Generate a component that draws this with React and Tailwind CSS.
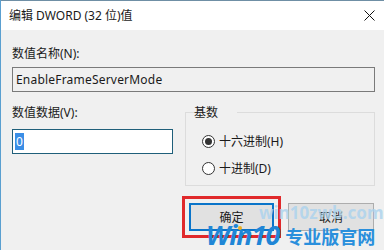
import React from "react";

const font = { fontFamily: '"Noto Sans", "Noto Sans CJK SC", sans-serif' };

const Radio = ({ checked, label }) => (
  <div className="flex items-center h-[17px]">
    <span className="w-[13px] h-[13px] rounded-full border border-[#333] bg-white flex items-center justify-center">
      {checked && <span className="w-[7px] h-[7px] rounded-full bg-[#333]" />}
    </span>
    <span className="ml-[4px] text-[12px] leading-[17px] text-[#1a1a1a]">{label}</span>
  </div>
);

export default function App() {
  return (
    <div
      className="relative w-[384px] h-[250px] overflow-hidden bg-[#f0f0f0] border-l border-[#5a9fd0] text-[#1a1a1a]"
      style={font}
    >
      {/* title bar */}
      <div className="h-[30px] bg-white border-t border-[#6f8fa5] flex items-center justify-between pl-[8px] pr-[9px]">
        <span className="text-[12px] leading-[17px]">编辑 DWORD (32 位)值</span>
        <svg width="11" height="11" viewBox="0 0 11 11">
          <path d="M0.5 0.5 L10.5 10.5 M10.5 0.5 L0.5 10.5" stroke="#111" strokeWidth="1" />
        </svg>
      </div>

      <div className="pl-[11px] pr-[9px] pt-[15px]">
        <div className="text-[12px] leading-[17px]">数值名称(N):</div>
        <div className="mt-[5px] h-[25px] border border-[#7a7a7a] flex items-center pl-[3px] text-[12px] tracking-[0.2px]">
          EnableFrameServerMode
        </div>

        <div className="flex mt-[12px]">
          <div className="w-[162px]">
            <div className="text-[12px] leading-[17px]">数值数据(V):</div>
            <div className="mt-[8px] h-[25px] w-[161px] border border-[#1f5f7a] bg-white flex items-center pl-[2px]">
              <span className="bg-[#3a8ee6] text-white text-[12px] leading-[17px] px-[1px]">0</span>
            </div>
          </div>
          <fieldset className="ml-[11px] w-[190px] h-[82px] border border-[#dcdcdc] pl-[16px]">
            <legend className="ml-[5px] px-[3px] -translate-x-[16px] text-[12px] leading-[17px]">基数</legend>
            <div className="mt-[12px] flex flex-col gap-[10px]">
              <Radio checked label="十六进制(H)" />
              <Radio label="十进制(D)" />
            </div>
          </fieldset>
        </div>

        <div className="flex justify-end mt-[17px] gap-[8px] pr-[1px]">
          <div className="border-[3px] border-[#e0292b] p-[4px] -m-[7px] mr-[-1px]">
            <button className="w-[85px] h-[28px] bg-[#e1e1e1] border-2 border-[#0a74c9] text-[12px] leading-[17px]">
              确定
            </button>
          </div>
          <button className="w-[86px] h-[28px] bg-[#e1e1e1] border border-[#adadad] text-[12px] leading-[17px]">
            取消
          </button>
        </div>
      </div>

      {/* watermark */}
      <span className="absolute left-[237px] top-[226px] w-[4px] h-[4px] rounded-full bg-[#f0b020]" />
      <span className="absolute left-[258px] top-[203px] text-[17px] font-bold leading-[20px] text-[#a9d2ee]/80">
        win10zwb.com
      </span>
      <div className="absolute left-[205px] top-[220px] flex items-end">
        <span className="text-[27px] font-bold italic leading-[30px] text-[#1f86d6] tracking-[-1px]">Win10</span>
        <span className="ml-[6px] text-[18px] font-bold leading-[26px] text-[#2a8fdc]">专业版官网</span>
      </div>
    </div>
  );
}
